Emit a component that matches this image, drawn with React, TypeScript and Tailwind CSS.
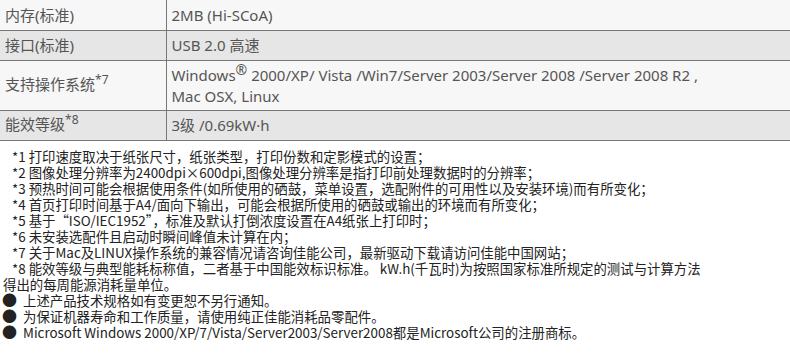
const ROWS = [
  { label: "内存(标准)", sup: "", value: <>2MB (Hi-SCoA)</>, bg: "bg-[#f7f7f7]", h: "h-[30px]" },
  { label: "接口(标准)", sup: "", value: <>USB 2.0 高速</>, bg: "bg-[#e6e6e6]", h: "h-[30px]" },
  {
    label: "支持操作系统",
    sup: "*7",
    value: (
      <>
        Windows<span className="text-[14px] relative -top-[6px]">®</span> 2000/XP/ Vista /Win7/Server 2003/Server 2008 /Server 2008 R2 ,
        <br />
        Mac OSX, Linux
      </>
    ),
    bg: "bg-[#f7f7f7]",
    h: "h-[50px]",
  },
  { label: "能效等级", sup: "*8", value: <>3级 /0.69kW·h</>, bg: "bg-[#e6e6e6]", h: "h-[30px]" },
];

const NOTES = [
  "*1 打印速度取决于纸张尺寸，纸张类型，打印份数和定影模式的设置；",
  "*2 图像处理分辨率为2400dpi×600dpi,图像处理分辨率是指打印前处理数据时的分辨率；",
  "*3 预热时间可能会根据使用条件(如所使用的硒鼓，菜单设置，选配附件的可用性以及安装环境)而有所变化；",
  "*4 首页打印时间基于A4/面向下输出，可能会根据所使用的硒鼓或输出的环境而有所变化；",
  "*5 基于“ISO/IEC1952”，标准及默认打倒浓度设置在A4纸张上打印时；",
  "*6 未安装选配件且启动时瞬间峰值未计算在内；",
  "*7 关于Mac及LINUX操作系统的兼容情况请咨询佳能公司，最新驱动下载请访问佳能中国网站；",
];

const BULLETS = [
  "上述产品技术规格如有变更恕不另行通知。",
  "为保证机器寿命和工作质量，请使用纯正佳能消耗品零配件。",
  "Microsoft Windows 2000/XP/7/Vista/Server2003/Server2008都是Microsoft公司的注册商标。",
];

export default function App() {
  return (
    <div className="w-[790px] h-[355px] overflow-hidden bg-white">
      <table
        className="w-full border-collapse text-[15px] text-[#555]"
        style={{ fontFamily: '"Noto Sans", "Noto Sans CJK SC", sans-serif' }}
      >
        <tbody>
          {ROWS.map((r) => (
            <tr key={r.label} className={`${r.bg} ${r.h} border-b border-[#777]`}>
              <td className="w-[166px] pl-[5px] border-r border-[#777] leading-5">
                {r.label}
                {r.sup && <span className="text-[12px] relative -top-[6px]">{r.sup}</span>}
              </td>
              <td className="pl-[5px] leading-5">{r.value}</td>
            </tr>
          ))}
        </tbody>
      </table>

      <div
        className="mt-[7px] text-[13.4px] leading-4 text-[#222]"
        style={{ fontFamily: '"Noto Sans CJK SC", "Noto Sans", sans-serif' }}
      >
        {NOTES.map((n) => (
          <div key={n} className="pl-[12px] whitespace-nowrap">
            {n}
          </div>
        ))}
        <div className="pl-[12px] whitespace-nowrap">
          *8 能效等级与典型能耗标称值，二者基于中国能效标识标准。 kW.h(千瓦时)为按照国家标准所规定的测试与计算方法
        </div>
        <div className="pl-[3px] whitespace-nowrap">得出的每周能源消耗量单位。</div>
        {BULLETS.map((b) => (
          <div key={b} className="pl-[2px] whitespace-nowrap flex items-center h-4">
            <span className="inline-block text-[15px] leading-4 mr-[6px]">●</span>
            <span>{b}</span>
          </div>
        ))}
      </div>
    </div>
  );
}
